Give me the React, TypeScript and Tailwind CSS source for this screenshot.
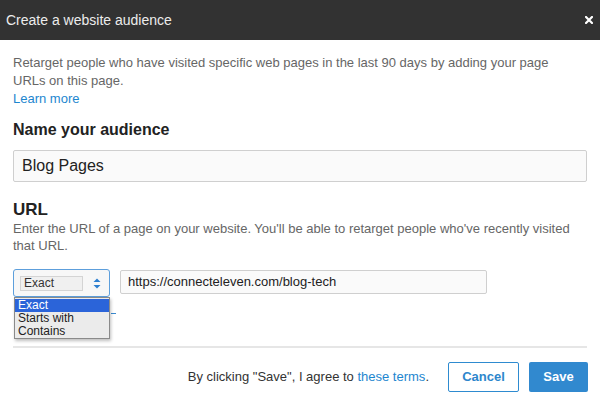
import React from "react";

export default function App() {
  return (
    <div
      className="w-[600px] h-[408px] bg-white overflow-hidden relative"
      style={{ fontFamily: '"Liberation Sans", Arial, sans-serif' }}
    >
      <div className="h-[40px] bg-[#323232] flex items-center justify-between pl-[6px] pr-[7px]">
        <span className="text-[14px] text-[#ececec]">Create a website audience</span>
        <svg width="8" height="8" viewBox="0 0 8 8">
          <path d="M1 1 L7 7 M7 1 L1 7" stroke="#ffffff" strokeWidth="2.2" strokeLinecap="square" />
        </svg>
      </div>

      <div className="px-[13px]">
        <p className="pt-[14px] w-[560px] text-[13px] leading-[18px] text-[#666666]">
          Retarget people who have visited specific web pages in the last 90 days by adding your page URLs on this page.
        </p>
        <p className="text-[13px] leading-[18px] text-[#1d86cf]">Learn more</p>

        <h2 className="mt-[12px] text-[16px] leading-[20px] font-bold text-[#222222]">Name your audience</h2>
        <div className="mt-[10px] h-[32px] border border-[#cfcfcf] rounded-[2px] bg-[#fafafa] flex items-center pl-[8px] text-[16px] text-[#222222]">
          Blog Pages
        </div>

        <h2 className="mt-[18px] text-[17px] leading-[20px] font-bold text-[#222222]">URL</h2>
        <p className="text-[13px] leading-[17px] text-[#666666]">
          Enter the URL of a page on your website. You'll be able to retarget people who've recently visited that URL.
        </p>

        <div className="mt-[15px] flex items-start gap-[10px] relative">
          <div className="relative w-[97px] h-[28px] border border-[#5d9fdc] rounded-[3px] bg-[#f7f7f7] flex items-center pl-[6px]">
            <div className="w-[63px] h-[15px] border border-[#d4d4d4] bg-[#f0f0f0] flex items-center pl-[3px] text-[12px] text-[#333333] leading-none">
              Exact
            </div>
            <svg className="absolute left-[79px] top-[8px]" width="8" height="11" viewBox="0 0 8 11">
              <path d="M4 0.5 L7.5 4 L0.5 4 Z" fill="#2d7fd0" />
              <path d="M0.5 7 L7.5 7 L4 10.5 Z" fill="#2d7fd0" />
            </svg>
            <div className="absolute left-[0px] top-[27px] w-[96px] bg-[#ebebeb] border border-[#8a8a8a] shadow-[1px_2px_3px_rgba(0,0,0,0.25)] z-10 py-[1px]">
              <div className="h-[13px] bg-[#2b64d9] text-white text-[12px] leading-[13px] pl-[3px]">Exact</div>
              <div className="h-[13px] text-[#222222] text-[12px] leading-[13px] pl-[3px]">Starts with</div>
              <div className="h-[12px] text-[#222222] text-[12px] leading-[13px] pl-[3px]">Contains</div>
            </div>
            <span className="absolute left-[97px] top-[43px] w-[5px] h-[1px] bg-[#3a8ad0]" />
          </div>
          <div className="mt-[1px] w-[367px] h-[24px] border border-[#cfcfcf] rounded-[2px] bg-[#fafafa] flex items-center pl-[7px] text-[13px] text-[#222222]">
            https://connecteleven.com/blog-tech
          </div>
        </div>

        <div className="mt-[49px] h-[2px] bg-[#e6e6e6]" />

        <div className="mt-[14px] flex items-center justify-end gap-[10px]">
          <span className="text-[13px] text-[#333333] mr-[9px]">
            By clicking "Save", I agree to <span className="text-[#1d86cf]">these terms</span>.
          </span>
          <button className="w-[71px] h-[30px] border border-[#2e8bd0] rounded-[2px] bg-white text-[#2d86cc] text-[13px] font-bold">
            Cancel
          </button>
          <button className="w-[59px] h-[30px] rounded-[2px] bg-[#3189cf] text-white text-[13px] font-bold -mr-[1px]">
            Save
          </button>
        </div>
      </div>
    </div>
  );
}
